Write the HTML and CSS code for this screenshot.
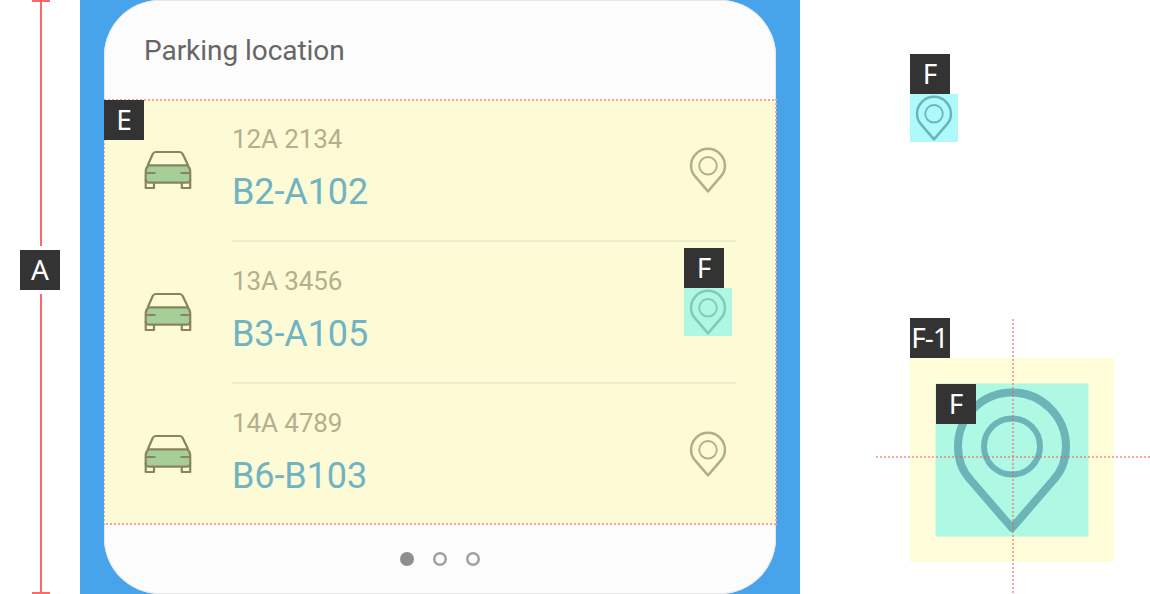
FILE: index.html
```html
<!DOCTYPE html>
<html lang="en">
<head>
<meta charset="utf-8">
<title>Parking location</title>
<link rel="stylesheet" href="styles.css">
</head>
<body>
<svg class="symbols" aria-hidden="true">
  <symbol id="pin" viewBox="0 0 153 153">
    <path d="M76.5 144.500 L35.500 97 C27 88 22.500 76 22.500 63 A54 54 0 0 1 130.500 63 C130.500 76 126 88 117.500 97 Z" fill="none" stroke="currentColor" stroke-width="8" stroke-linejoin="round"/>
    <circle cx="76.500" cy="63" r="28" fill="none" stroke="currentColor" stroke-width="6"/>
  </symbol>
  <symbol id="car" viewBox="0 0 48 48">
    <rect class="car-body" x="2" y="19" width="44" height="18" rx="4"/>
    <g fill="none" stroke="currentColor" stroke-width="2.200" stroke-linejoin="round">
      <path d="M3.700 19.500 L8.700 8 Q9.700 6 11.700 6 H35.700 Q37.700 6 38.700 8 L44.200 19.500"/>
      <path d="M4.700 19.300 H43.200 Q46.200 21.500 46.200 25 V33 Q46.200 36.700 42.700 36.700 H5.200 Q1.700 36.700 1.700 33 V25 Q1.700 21.500 4.700 19.300 Z"/>
      <path d="M1.700 27 H11.500 M36.500 27 H46.200"/>
      <path d="M1.700 33 V42 H10 V37 M46.200 33 V42 H37.800 V37"/>
    </g>
  </symbol>
</svg>
<main class="spec">
  <aside class="measure">
    <div class="rule rule-top"></div>
    <span class="tag">A</span>
    <div class="rule rule-bottom"></div>
  </aside>
  <section class="screen">
    <div class="card">
      <h1 class="title">Parking location</h1>
      <div class="list">
        <span class="tag tag-list">E</span>
        <div class="row">
          <svg class="car"><use href="#car"/></svg>
          <div class="info">
            <div><div class="plate">12A 2134</div><div class="spot">B2-A102</div></div>
            <svg class="pin"><use href="#pin"/></svg>
          </div>
        </div>
        <div class="row">
          <svg class="car"><use href="#car"/></svg>
          <div class="info">
            <div><div class="plate">13A 3456</div><div class="spot">B3-A105</div></div>
            <div class="pin-slot"><span class="tag">F</span><svg class="pin pin-marked"><use href="#pin"/></svg></div>
          </div>
        </div>
        <div class="row">
          <svg class="car"><use href="#car"/></svg>
          <div class="info">
            <div><div class="plate">14A 4789</div><div class="spot">B6-B103</div></div>
            <svg class="pin"><use href="#pin"/></svg>
          </div>
        </div>
      </div>
      <div class="dots"><i class="dot active"></i><i class="dot"></i><i class="dot"></i></div>
    </div>
  </section>
  <section class="details">
    <div class="callout">
      <span class="tag">F</span>
      <svg class="pin pin-small"><use href="#pin"/></svg>
    </div>
    <div class="callout">
      <span class="tag tag-wide">F-1</span>
      <div class="area">
        <svg class="pin pin-large"><use href="#pin"/></svg>
        <span class="tag tag-inner">F</span>
        <div class="guide guide-x"></div>
        <div class="guide guide-y"></div>
      </div>
    </div>
  </section>
</main>
</body>
</html>
```

FILE: styles.css
```css
* { box-sizing: border-box; }
body {
  margin: 0;
  background: #fff;
  font-family: Roboto, "Liberation Sans", sans-serif;
}
svg { display: block; flex: none; }
.symbols { position: absolute; width: 0; height: 0; }
.spec {
  display: flex;
  width: 1150px;
  height: 594px;
  overflow: hidden;
}
.tag {
  display: block;
  flex: none;
  width: 40px;
  height: 40px;
  background: #333;
  color: #fff;
  font: 28px/38px "Noto Sans", sans-serif;
  text-align: center;
}
.tag-wide { letter-spacing: -1px; text-indent: -1px; white-space: nowrap; }

/* Height measure */
.measure {
  display: flex;
  flex-direction: column;
  align-items: center;
  gap: 4px;
  width: 80px;
}
.rule {
  width: 18px;
  background: linear-gradient(#ff6868, #ff6868) center / 2px 100% no-repeat;
}
.rule-top { height: 246px; border-top: 2px solid #ff6868; margin-left: 2px; }
.rule-bottom { height: 300px; border-bottom: 2px solid #ff6868; margin-left: 2px; }

/* Widget */
.screen { width: 720px; padding: 0 24px; background: #48a4ea; }
.card {
  display: flex;
  flex-direction: column;
  height: 594px;
  border-radius: 56px;
  background: #fcfcfc;
  box-shadow: inset 0 0 0 1px #e6e8e9;
}
.title {
  height: 100px;
  margin: 0;
  padding-left: 40px;
  font-size: 28px;
  font-weight: 400;
  line-height: 101px;
  letter-spacing: -.05px;
  color: #666;
}
.list {
  --dot: #f9a197;
  position: relative;
  height: 424px;
  background: #fdfad6;
}
.list::after {
  content: "";
  position: absolute;
  inset: -1px -1px -1px 0;
  background:
    repeating-linear-gradient(90deg, var(--dot) 0 2px, transparent 2px 4px) 0 0 / 100% 2px no-repeat,
    repeating-linear-gradient(90deg, transparent 0 2px, var(--dot) 2px 4px) 0 100% / 100% 2px no-repeat,
    repeating-linear-gradient(var(--dot) 0 2px, transparent 2px 4px) 0 0 / 1px 100% no-repeat,
    repeating-linear-gradient(var(--dot) 0 2px, transparent 2px 4px) 100% 0 / 2px 100% no-repeat;
}
.tag-list { position: absolute; left: 0; top: 0; z-index: 1; }
.row { display: flex; height: 142px; padding: 0 40px; }
.row:last-child { height: 140px; }
.car { width: 48px; height: 48px; margin: 46px 40px 0 0; color: #88845f; }
.car-body { fill: #a6cf97; }
.info {
  display: flex;
  justify-content: space-between;
  flex: 1;
  border-bottom: 2px solid #efebca;
}
.row:last-child .info { border: 0; }
.plate { padding-top: 23px; font-size: 26px; line-height: 32px; letter-spacing: -.1px; color: #b5af8b; }
.spot { margin-top: 15px; font-size: 36px; line-height: 44px; letter-spacing: -.1px; color: #70b3c1; }
.pin { width: 48px; height: 48px; color: #b3ae8a; }
.info > .pin { margin: 46px 4px 0 0; }
.pin-slot { margin: 6px 4px 0 0; }
.pin-marked { background: #adf7e3; color: #80cab6; }
.dots {
  display: flex;
  justify-content: center;
  gap: 19px;
  padding-top: 28px;
}
.dot { width: 14px; height: 14px; border-radius: 50%; box-shadow: inset 0 0 0 2.500px #a0a0a0; }
.dot.active { background: #8e8e8e; box-shadow: none; }

/* Icon callouts */
.details {
  display: flex;
  flex-direction: column;
  gap: 176px;
  width: 350px;
  padding: 54px 0 0 110px;
}
.pin-small { background: #adf9fc; color: #6bb5b8; }
.area { position: relative; width: 204px; height: 204px; padding: 26px; background: #fffdd9; }
.pin-large {
  width: 153px;
  height: 153px;
  background: #aff8e4;
  color: #6bb5b8;
  transform: translate(-.5px, -.5px);
}
.tag-inner { position: absolute; left: 26px; top: 26px; }
.guide { position: absolute; }
.guide-x {
  left: -34px;
  top: 98px;
  width: 274px;
  height: 2px;
  background: repeating-linear-gradient(90deg, rgba(255, 80, 80, .5) 0 2px, transparent 2px 4px);
}
.guide-y {
  left: 102px;
  top: -39px;
  width: 2px;
  height: 275px;
  background: repeating-linear-gradient(rgba(255, 80, 80, .5) 0 2px, transparent 2px 4px);
}
```
